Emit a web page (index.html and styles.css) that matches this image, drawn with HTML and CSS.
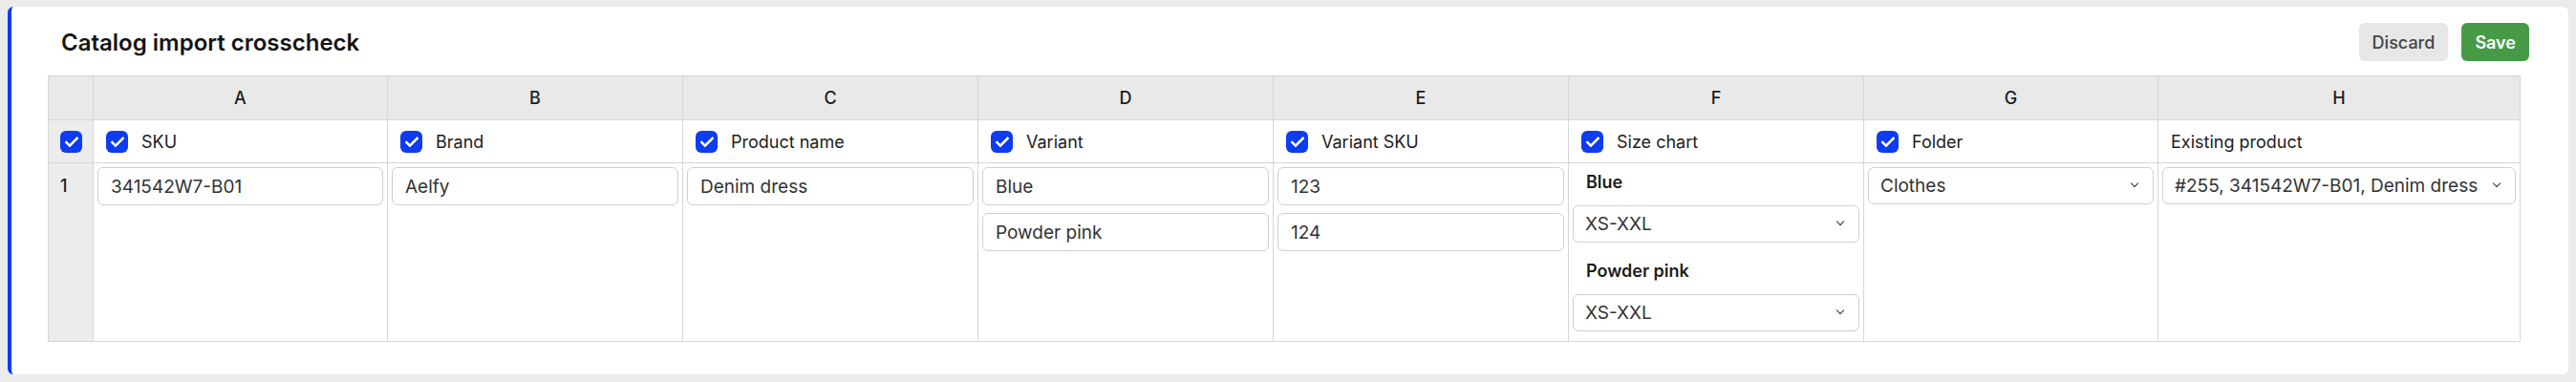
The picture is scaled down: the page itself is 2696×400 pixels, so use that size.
FILE: index.html
```html
<!DOCTYPE html>
<html lang="en">
<head>
  <meta charset="UTF-8" />
  <meta name="viewport" content="width=device-width, initial-scale=1.0"/>
  <title>Catalog import crosscheck</title>
  <link rel="stylesheet" href="styles.css">
</head>
<body>

  <!-- Import card -->
  <section class="card">
    <div class="card-head">
      <h1 class="card-title">Catalog import crosscheck</h1>
      <div class="actions">
        <button class="btn btn-discard">Discard</button>
        <button class="btn btn-save">Save</button>
      </div>
    </div>

    <!-- Sheet -->
    <table class="sheet">
      <colgroup>
        <col class="col-idx">
        <col class="col-a">
        <col class="col-std">
        <col class="col-std">
        <col class="col-std">
        <col class="col-std">
        <col class="col-std">
        <col class="col-a">
        <col class="col-wide">
      </colgroup>
      <thead>
        <tr>
          <th class="idx"></th>
          <th>A</th>
          <th>B</th>
          <th>C</th>
          <th>D</th>
          <th>E</th>
          <th>F</th>
          <th>G</th>
          <th>H</th>
        </tr>
      </thead>
      <tbody>
        <tr class="field-row">
          <td class="idx"><input type="checkbox" class="check" checked></td>
          <td><label class="field"><input type="checkbox" class="check" checked>SKU</label></td>
          <td><label class="field"><input type="checkbox" class="check" checked>Brand</label></td>
          <td><label class="field"><input type="checkbox" class="check" checked>Product name</label></td>
          <td><label class="field"><input type="checkbox" class="check" checked>Variant</label></td>
          <td><label class="field"><input type="checkbox" class="check" checked>Variant SKU</label></td>
          <td><label class="field"><input type="checkbox" class="check" checked>Size chart</label></td>
          <td><label class="field"><input type="checkbox" class="check" checked>Folder</label></td>
          <td><span class="field">Existing product</span></td>
        </tr>
        <tr class="data-row">
          <td class="idx row-num">1</td>
          <td><input class="text-input" type="text" value="341542W7-B01"></td>
          <td><input class="text-input" type="text" value="Aelfy"></td>
          <td><input class="text-input" type="text" value="Denim dress"></td>
          <td>
            <div class="stack">
              <input class="text-input" type="text" value="Blue">
              <input class="text-input" type="text" value="Powder pink">
            </div>
          </td>
          <td>
            <div class="stack">
              <input class="text-input" type="text" value="123">
              <input class="text-input" type="text" value="124">
            </div>
          </td>
          <td class="size-cell">
            <div class="size-group">
              <div class="size-label">Blue</div>
              <div class="select"><select><option>XS-XXL</option></select></div>
            </div>
            <div class="size-group">
              <div class="size-label">Powder pink</div>
              <div class="select"><select><option>XS-XXL</option></select></div>
            </div>
          </td>
          <td>
            <div class="select"><select><option>Clothes</option></select></div>
          </td>
          <td>
            <div class="select select-tight"><select><option>#255, 341542W7-B01, Denim dress</option></select></div>
          </td>
        </tr>
      </tbody>
    </table>
  </section>

</body>
</html>
```

FILE: styles.css
```css
body {
  margin: 0;
  padding: 7px 8px 0;
  background: #ebebeb;
  font-family: Inter, "Noto Sans", Arial, sans-serif;
  color: #1c1c1c;
}

.card {
  box-sizing: border-box;
  height: 385px;
  background: #fff;
  border-left: 4px solid #0d3cf2;
  border-radius: 6px;
  padding: 17px 41px 0 38px;
}

.card-head {
  display: flex;
  justify-content: space-between;
  align-items: center;
  height: 40px;
  margin-bottom: 15px;
}

.card-title {
  margin: 0;
  padding-left: 14px;
  font-size: 24px;
  font-weight: 600;
  color: #141414;
}

.actions {
  display: flex;
  gap: 14px;
}

.btn {
  height: 40px;
  padding: 0 14px;
  border: none;
  border-radius: 6px;
  font-family: inherit;
  font-size: 18px;
  cursor: pointer;
}

.btn-discard {
  background: #e7e7e7;
  color: #444;
  font-weight: 500;
}

.btn-save {
  background: #479b47;
  color: #fff;
  font-weight: 600;
}

/* sheet table */
.sheet {
  table-layout: fixed;
  width: 2587px;
  border-collapse: collapse;
  font-size: 18px;
}

.col-idx { width: 47px; }
.col-a { width: 308px; }
.col-std { width: 309px; }
.col-wide { width: 379px; }

.sheet th,
.sheet td {
  border: 1px solid #d6d6d6;
}

.sheet th {
  height: 45px;
  padding: 0;
  background: #e9e9e9;
  font-weight: 500;
  color: #1c1c1c;
}

.sheet td.idx {
  background: #ececec;
  text-align: center;
}

.field-row td {
  height: 44px;
  padding: 0 13px;
}

.field-row td.idx {
  padding: 0;
}

.field {
  display: flex;
  align-items: center;
  gap: 14px;
}

.check {
  appearance: none;
  -webkit-appearance: none;
  position: relative;
  display: block;
  width: 23px;
  height: 23px;
  margin: 0;
  border-radius: 6px;
  background: #0d3cf2;
  flex-shrink: 0;
}

.idx .check {
  margin: 0 auto;
}

.check::after {
  content: '';
  position: absolute;
  left: 8px;
  top: 3px;
  width: 5px;
  height: 11px;
  border: solid #fff;
  border-width: 0 3px 3px 0;
  border-radius: 1px;
  transform: rotate(45deg);
}

.data-row td {
  height: 178px;
  padding: 4px;
  vertical-align: top;
}

.data-row td.row-num {
  padding: 4px 0 0 12px;
  text-align: left;
  line-height: 40px;
  font-weight: 500;
}

.text-input {
  box-sizing: border-box;
  display: block;
  width: 100%;
  height: 40px;
  padding: 0 13px;
  border: 1px solid #cfcfcf;
  border-radius: 6px;
  font-family: inherit;
  font-size: 19px;
  color: #333;
  background: #fff;
}

.stack {
  display: flex;
  flex-direction: column;
  gap: 8px;
}

.select {
  position: relative;
}

.select select {
  box-sizing: border-box;
  display: block;
  width: 100%;
  height: 39px;
  padding: 0 34px 0 12px;
  appearance: none;
  -webkit-appearance: none;
  border: 1px solid #cfcfcf;
  border-radius: 6px;
  background: #fff;
  font-family: inherit;
  font-size: 19px;
  color: #333;
}

.select-tight select {
  padding-right: 26px;
}

.select::after {
  content: '';
  position: absolute;
  right: 17px;
  top: 14px;
  width: 5px;
  height: 5px;
  border: solid #333;
  border-width: 0 1.6px 1.6px 0;
  transform: rotate(45deg);
  pointer-events: none;
}

.size-cell .size-group + .size-group {
  margin-top: 14px;
}

.size-label {
  padding: 3px 14px 11px;
  line-height: 26px;
  font-weight: 600;
  font-size: 18px;
}
```
